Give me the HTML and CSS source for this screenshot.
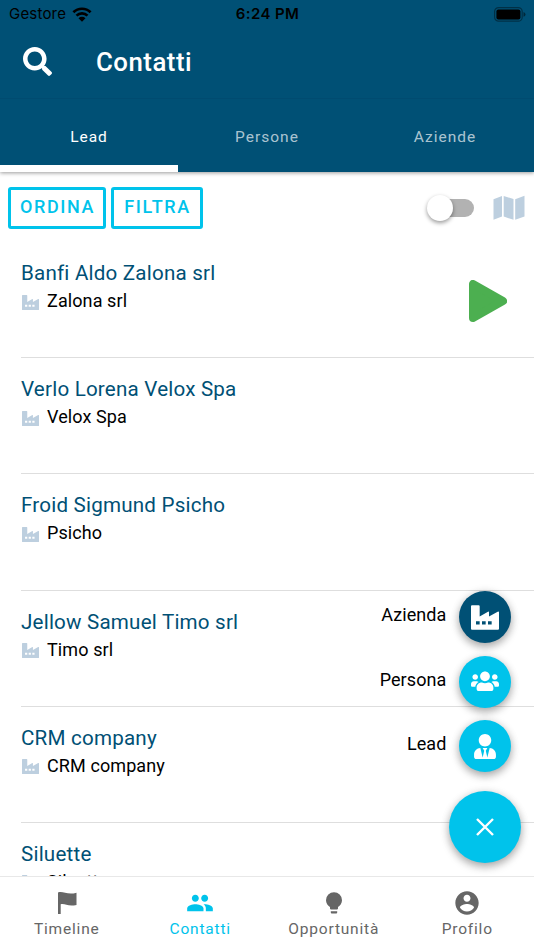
FILE: index.html
```
<!DOCTYPE html>
<html lang="it">
<head>
<meta charset="utf-8">
<title>Contatti</title>
<link rel="stylesheet" href="styles.css">
</head>
<body>
<svg class="defs" aria-hidden="true">
  <symbol id="factory" viewBox="0 0 84 74"><path fill-rule="evenodd" d="M3 0h20q3 0 3 3v31l25-14q3-2 3 2v12l26-14q4-2 4 2v49q0 3-3 3H3q-3 0-3-3V3q0-3 3-3zM15 48v10h11V48zM33 48v10h11V48zM51 48v10h11V48z"/></symbol>
</svg>
<div class="app">
  <header class="header">
    <div class="status">
      <div class="carrier"><span>Gestore</span>
        <svg class="wifi" viewBox="0 0 20 15"><path d="M1.4 5.3a12.2 12.2 0 0 1 17.2 0M4.5 8.6a7.8 7.8 0 0 1 11 0" fill="none" stroke="#000" stroke-width="2.7"/><path d="M6.5 11.3a5 5 0 0 1 7 0L10 14.8z"/></svg>
      </div>
      <strong class="clock">6:24 PM</strong>
      <svg class="battery" viewBox="0 0 32 15"><rect x=".6" y=".6" width="27.6" height="13.6" rx="4" fill="none" stroke="#000" stroke-opacity=".4" stroke-width="1.2"/><rect x="2.4" y="2.4" width="24" height="10" rx="2"/><path d="M29.5 5q2 .8 2 2.4t-2 2.4z" opacity=".5"/></svg>
    </div>
    <div class="titlebar">
      <svg class="search" viewBox="0 0 512 512"><path d="M505 442.7L405.3 343c-4.5-4.5-10.6-7-17-7H372c27.6-35.3 44-79.7 44-128C416 93.1 322.9 0 208 0S0 93.1 0 208s93.1 208 208 208c48.3 0 92.7-16.4 128-44v16.3c0 6.4 2.5 12.5 7 17l99.7 99.7c9.4 9.4 24.6 9.4 33.9 0l28.3-28.3c9.4-9.4 9.4-24.6.1-34zM208 336c-70.7 0-128-57.2-128-128 0-70.7 57.2-128 128-128 70.7 0 128 57.2 128 128 0 70.7-57.2 128-128 128z"/></svg>
      <h1>Contatti</h1>
    </div>
    <nav class="tabs"><a class="tab active">Lead</a><a class="tab">Persone</a><a class="tab">Aziende</a></nav>
  </header>
  <main class="content">
    <div class="tools">
      <button class="outline order">ORDINA</button><button class="outline filter">FILTRA</button>
      <span class="toggle"><span class="knob"></span></span>
      <svg class="map" viewBox="0 0 32 26"><path d="M.5 4.2L9 1v20.5L.5 24.8zM10.7 1L20.5 4v20.8l-9.8-3.2zM22.2 4.2L31.5.7v20.8l-9.3 3.3z"/></svg>
    </div>
    <ul class="list">
      <li class="item"><div class="name">Banfi Aldo Zalona srl</div><div class="company"><svg><use href="#factory"/></svg>Zalona srl</div>
        <svg class="play" viewBox="0 0 38 42"><path d="M4 4v34L34 21z"/></svg></li>
      <li class="item"><div class="name">Verlo Lorena Velox Spa</div><div class="company"><svg><use href="#factory"/></svg>Velox Spa</div></li>
      <li class="item"><div class="name">Froid Sigmund Psicho</div><div class="company"><svg><use href="#factory"/></svg>Psicho</div></li>
      <li class="item"><div class="name">Jellow Samuel Timo srl</div><div class="company"><svg><use href="#factory"/></svg>Timo srl</div></li>
      <li class="item"><div class="name">CRM company</div><div class="company"><svg><use href="#factory"/></svg>CRM company</div></li>
      <li class="item"><div class="name">Siluette</div><div class="company"><svg><use href="#factory"/></svg>Siluette</div></li>
    </ul>
  </main>
  <div class="fabs">
    <div class="action"><span>Azienda</span><button class="fab dark"><svg class="i-factory"><use href="#factory"/></svg></button></div>
    <div class="action"><span>Persona</span><button class="fab"><svg class="i-users" viewBox="0 0 640 512"><path d="M96 224c35.3 0 64-28.7 64-64s-28.7-64-64-64-64 28.7-64 64 28.7 64 64 64zm448 0c35.3 0 64-28.7 64-64s-28.7-64-64-64-64 28.7-64 64 28.7 64 64 64zm32 32h-64c-17.6 0-33.5 7.1-45.1 18.6 40.3 22.1 68.9 62 75.1 109.4h66c17.7 0 32-14.3 32-32v-32c0-35.3-28.7-64-64-64zm-256 0c61.9 0 112-50.1 112-112S381.9 32 320 32 208 82.1 208 144s50.1 112 112 112zm76.8 32h-8.3c-20.8 10-43.9 16-68.5 16s-47.6-6-68.5-16h-8.3C179.6 288 128 339.6 128 403.2V432c0 26.5 21.5 48 48 48h288c26.5 0 48-21.5 48-48v-28.8c0-63.6-51.6-115.2-115.2-115.2zm-223.7-13.4C161.5 263.1 145.6 256 128 256H64c-35.3 0-64 28.7-64 64v32c0 17.7 14.3 32 32 32h65.9c6.3-47.4 34.9-87.3 75.2-109.4z"/></svg></button></div>
    <div class="action"><span>Lead</span><button class="fab"><svg class="i-tie" viewBox="0 0 448 512"><path d="M224 256c70.7 0 128-57.3 128-128S294.7 0 224 0 96 57.3 96 128s57.3 128 128 128zm95.8 32.6L272 480l-32-136 32-56h-96l32 56-32 136-47.8-191.4C56.9 292 0 350.3 0 422.4V464c0 26.5 21.5 48 48 48h352c26.5 0 48-21.5 48-48v-41.6c0-72.1-56.9-130.4-128.2-133.8z"/></svg></button></div>
    <button class="fab main"><svg class="i-close" viewBox="0 0 20 20"><path d="M2 2l16 16M18 2L2 18"/></svg></button>
  </div>
  <nav class="bottom">
    <a class="dest"><svg viewBox="0 0 28 28"><path d="M5 3.5C10 1.5 14 6.5 23.5 3.8v12.1C15 18.2 12 14 7.7 15.3V25H5z"/></svg><span>Timeline</span></a>
    <a class="dest current"><svg viewBox="0 0 24 24"><path d="M16 11c1.66 0 2.99-1.34 2.99-3S17.66 5 16 5s-3 1.34-3 3 1.34 3 3 3zm-8 0c1.66 0 2.99-1.34 2.99-3S9.66 5 8 5 5 6.34 5 8s1.34 3 3 3zm0 2c-2.33 0-7 1.17-7 3.5V19h14v-2.5c0-2.33-4.67-3.5-7-3.5zm8 0c-.29 0-.62.02-.97.05 1.16.84 1.97 1.97 1.97 3.45V19h6v-2.5c0-2.33-4.67-3.5-7-3.5z"/></svg><span>Contatti</span></a>
    <a class="dest"><svg viewBox="0 0 28 28"><path d="M14 3.2a8 8 0 0 0-8 8c0 3 1.7 5.3 4 6.8v1.6q0 .8.8.8h6.4q.8 0 .8-.8V18c2.300-1.500 4-3.800 4-6.800a8 8 0 0 0-8-8zM10.800 22.300h6.400v1.200q0 1-1 1h-4.400q-1 0-1-1z"/></svg><span>Opportunità</span></a>
    <a class="dest"><svg viewBox="0 0 24 24"><path d="M12 2C6.480 2 2 6.480 2 12s4.480 10 10 10 10-4.480 10-10S17.520 2 12 2zm0 3c1.660 0 3 1.340 3 3s-1.340 3-3 3-3-1.340-3-3 1.340-3 3-3zm0 14.200c-2.500 0-4.710-1.280-6-3.220.030-1.990 4-3.080 6-3.080 1.990 0 5.970 1.090 6 3.080-1.290 1.940-3.500 3.220-6 3.220z"/></svg><span>Profilo</span></a>
  </nav>
</div>
</body>
</html>
```
FILE: styles.css
```
* { box-sizing: border-box; }
body { margin: 0; font-family: Roboto, "Liberation Sans", sans-serif; background: #fff; color: #000; }
button { font-family: inherit; margin: 0; padding: 0; }
svg { display: block; flex: none; }
.defs { position: absolute; width: 0; height: 0; }
.app { position: relative; width: 534px; height: 950px; overflow: hidden; display: flex; flex-direction: column; }

.header { flex: none; height: 172px; background: #005075; box-shadow: 0 1px 4px rgba(0,0,0,.4); position: relative; z-index: 1; }
.status { height: 26px; display: grid; grid-template-columns: 1fr auto 1fr; align-items: center; padding: 1px 8px 0 9px; font-family: Inter, sans-serif; font-size: 15px; line-height: 26px; }
.carrier { display: flex; align-items: center; gap: 6px; letter-spacing: .2px; }
.wifi { width: 20px; height: 15px; }
.clock { font-weight: 600; letter-spacing: .4px; }
.battery { width: 32px; height: 15px; justify-self: end; }
.titlebar { height: 73px; display: flex; align-items: center; padding: 0 0 1px 23px; border-bottom: 1px solid #004b70; }
.search { width: 29px; height: 29px; fill: #fff; }
h1 { margin: 0 0 0 44px; font-size: 25.800px; font-weight: 500; color: #fff; letter-spacing: .5px; }
.tabs { height: 73px; display: grid; grid-template-columns: repeat(3, 1fr); }
.tab { display: flex; align-items: center; justify-content: center; color: rgba(255,255,255,.68); font-size: 15.500px; letter-spacing: 1px; padding-top: 2px; border-bottom: 0 solid #fff; }
.tab.active { color: #fff; border-bottom-width: 7px; padding-top: 9px; }

.content { flex: 1; min-height: 0; overflow: hidden; }
.tools { height: 70px; display: flex; align-items: flex-start; padding: 15px 9px 0 8px; }
.outline { height: 42px; border: 3px solid #00c3eb; border-radius: 3px; background: #fff; color: #00c3eb; font-size: 18px; font-weight: 500; letter-spacing: 1.600px; padding: 0 0 3px 1px; }
.order { width: 98px; }
.filter { width: 92px; margin-left: 5px; }
.toggle { margin: 12px 19px 0 auto; width: 42px; height: 18px; border-radius: 9px; background: #b2b2b2; display: flex; align-items: center; }
.knob { width: 26px; height: 26px; flex: none; margin-left: -5px; border-radius: 50%; background: #fff; box-shadow: 0 2px 4px rgba(0,0,0,.4); }
.map { width: 32px; height: 26px; margin-top: 8px; fill: #bdcfdf; }

.list { list-style: none; margin: 0 0 0 21px; padding: 0; }
.item { position: relative; height: 116.200px; border-bottom: 1.500px solid #dedede; padding-top: 18px; }
.name { color: #005075; font-size: 20.600px; line-height: 27px; letter-spacing: .2px; }
.company { display: flex; align-items: center; font-size: 18px; line-height: 27px; letter-spacing: .1px; }
.company svg { width: 17px; height: 15px; margin: 3px 8px 0 1px; fill: #bdcfdf; }
.play { position: absolute; right: 27px; top: 38px; width: 38px; height: 42px; fill: #4caf50; stroke: #4caf50; stroke-width: 8px; stroke-linejoin: round; }

.fabs { position: absolute; right: 13px; top: 591px; display: flex; flex-direction: column; align-items: flex-end; }
.action { display: flex; align-items: center; gap: 12px; height: 52px; margin: 0 10.500px 12.700px 0; font-size: 18px; letter-spacing: .1px; }
.action span { padding-bottom: 5px; }
.fab { width: 52px; height: 52px; border: 0; border-radius: 50%; background: #00c3eb; display: flex; align-items: center; justify-content: center; box-shadow: 0 4px 8px rgba(0,0,0,.28), 0 1px 10px rgba(0,0,0,.12); }
.fab svg { fill: #fff; }
.fab.dark { background: #005075; }
.fab.main { width: 72px; height: 72px; margin-top: 6px; }
.i-factory { width: 28px; height: 25px; }
.i-users { width: 28px; height: 22.400px; }
.i-tie { width: 22px; height: 25px; }
.fab .i-close { width: 20px; height: 20px; fill: none; stroke: #fff; stroke-width: 2.400px; }

.bottom { flex: none; position: relative; height: 74px; display: grid; grid-template-columns: repeat(4, 1fr); background: #fff; border-top: 1px solid #e8e8e8; z-index: 1; }
.fabs { z-index: 2; }
.dest { display: flex; flex-direction: column; align-items: center; padding-top: 12px; color: #666; font-size: 15.500px; line-height: 20px; letter-spacing: .8px; }
.dest svg { width: 28px; height: 28px; fill: currentColor; margin-bottom: 2px; }
.dest.current { color: #00c3eb; }
```
